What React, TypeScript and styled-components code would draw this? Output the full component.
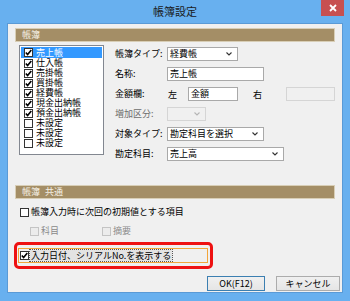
import React from "react";
import styled, { createGlobalStyle } from "styled-components";

const Global = createGlobalStyle`
  html, body { margin: 0; padding: 0; }
  body {
    width: 350px; height: 301px; overflow: hidden;
    background: #68b0ef;
    font-family: "Noto Sans CJK JP", "Noto Sans", sans-serif;
    font-size: 9px; color: #000;
  }
`;

const Window = styled.div`
  width: 350px; height: 301px;
  display: flex; flex-direction: column;
  background: #68b0ef;
  box-sizing: border-box;
`;

const TitleBar = styled.div`
  position: relative;
  height: 23px;
  display: flex; align-items: center; justify-content: center;
  font-size: 11px; line-height: 14px; color: #1a1a1a;
  padding-bottom: 1px; box-sizing: border-box;
`;

const CloseBtn = styled.div`
  position: absolute; top: 0; right: 6px;
  width: 23px; height: 16px;
  background: #c75050;
  display: flex; align-items: center; justify-content: center;
`;

const Client = styled.div`
  margin: 0 7px 8px 7px;
  flex: 1;
  background: #f0f0f0;
  border: 1px solid #5a9ad6;
  border-top-color: #5a9ad6;
  padding: 4px 7px 0 7px;
  display: flex; flex-direction: column;
  box-sizing: border-box;
`;

const SectionHeader = styled.div<{ $mt?: number }>`
  height: 14px;
  margin-top: ${(p) => p.$mt ?? 0}px;
  background: #a48e66;
  border: 1px solid #d8ceb6;
  box-sizing: border-box;
  color: #f4efe4;
  font-size: 9px; line-height: 12px;
  padding-left: 6px;
  display: flex; gap: 5px;
`;

const Body = styled.div`
  display: flex;
  margin-top: 3px;
  padding-left: 4px;
  gap: 11px;
`;

const List = styled.div`
  width: 95px; height: 110px;
  background: #fff;
  border: 1px solid #828790;
  box-sizing: border-box;
  padding: 1px 1px;
  display: flex; flex-direction: column;
`;

const ListRow = styled.div<{ $sel?: boolean }>`
  height: 10px;
  display: flex; align-items: center;
  padding-left: 3px;
  gap: 3px;
  background: ${(p) => (p.$sel ? "#3399ff" : "transparent")};
  color: ${(p) => (p.$sel ? "#fff" : "#000")};
  line-height: 10px;
  &:first-child { height: 11px; }
`;

const Box = styled.span<{ $disabled?: boolean }>`
  width: 9px; height: 9px; flex: none;
  box-sizing: border-box;
  border: 1px solid ${(p) => (p.$disabled ? "#c4c4c4" : "#333")};
  background: ${(p) => (p.$disabled ? "#ececec" : "#fff")};
  display: inline-flex; align-items: center; justify-content: center;
`;

const Check = () => (
  <svg width="7" height="7" viewBox="0 0 7 7">
    <path d="M0.8 3.5 L2.6 5.5 L6.3 0.9" fill="none" stroke="#000" strokeWidth="1.6" />
  </svg>
);

const CheckBox = ({ checked, disabled }: { checked?: boolean; disabled?: boolean }) => (
  <Box $disabled={disabled}>{checked ? <Check /> : null}</Box>
);

const Fields = styled.div`
  margin-top: 2px;
  display: grid;
  grid-template-columns: 52px auto;
  grid-auto-rows: 14px;
  row-gap: 6px;
  align-items: center;
`;

const Label = styled.div<{ $disabled?: boolean }>`
  color: ${(p) => (p.$disabled ? "#6d6d6d" : "#000")};
  line-height: 14px;
  white-space: nowrap;
`;

const Field = styled.div<{ $w: number; $disabled?: boolean }>`
  width: ${(p) => p.$w}px; height: 14px;
  box-sizing: border-box;
  border: 1px solid ${(p) => (p.$disabled ? "#d5d5d5" : "#a9a9a9")};
  background: ${(p) => (p.$disabled ? "#f0f0f0" : "#fff")};
  display: flex; align-items: center;
  padding-left: 2px; padding-right: 5px;
  line-height: 12px;
  white-space: nowrap;
`;

const FieldText = styled.span`
  flex: 1;
`;

const Chevron = ({ color = "#333" }: { color?: string }) => (
  <svg width="6" height="4" viewBox="0 0 6 4">
    <path d="M0.5 0.5 L3 3 L5.5 0.5" fill="none" stroke={color} strokeWidth="1.1" />
  </svg>
);

const AmountRow = styled.div`
  display: flex; align-items: center;
`;

const Side = styled.span<{ $w: number }>`
  width: ${(p) => p.$w}px;
  padding-left: 1px;
`;

const CheckRow = styled.label<{ $indent: number; $mt: number; $gap?: number }>`
  display: flex; align-items: center;
  margin-top: ${(p) => p.$mt}px;
  padding-left: ${(p) => p.$indent}px;
  height: 12px;
  gap: ${(p) => p.$gap ?? 2}px;
  line-height: 12px;
  white-space: nowrap;
`;

const DisabledItem = styled.span<{ $w: number }>`
  display: flex; align-items: center; gap: 2px;
  width: ${(p) => p.$w}px;
  color: #8a8a8a;
`;

const Highlight = styled.div`
  margin-top: 5px;
  margin-left: -1px;
  width: 199px; height: 27px;
  box-sizing: border-box;
  border: 3px solid #ee1111;
  border-radius: 5px;
  padding: 3px 2px 0 1px;
`;

const FocusFrame = styled.div`
  height: 15px;
  box-sizing: border-box;
  border: 1px solid #f2a53a;
  display: flex; align-items: center;
  padding-left: 1px; gap: 1px;
`;

const FocusText = styled.span`
  outline: 1px dotted #555;
  background: #e3e3e3;
  line-height: 11px;
  padding: 0 1px;
`;

const Buttons = styled.div`
  margin-top: 7px;
  margin-right: -5px;
  display: flex; justify-content: flex-end; gap: 11px;
`;

const Button = styled.div<{ $w: number; $default?: boolean }>`
  width: ${(p) => p.$w}px; height: 15px;
  box-sizing: border-box;
  border: 1px solid ${(p) => (p.$default ? "#3c7fb1" : "#acacac")};
  background: linear-gradient(#f0f0f0, #e5e5e5);
  display: flex; align-items: center; justify-content: center;
  line-height: 12px;
`;

const listItems = [
  { t: "売上帳", c: true },
  { t: "仕入帳", c: true },
  { t: "売掛帳", c: true },
  { t: "買掛帳", c: true },
  { t: "経費帳", c: true },
  { t: "現金出納帳", c: true },
  { t: "預金出納帳", c: true },
  { t: "未設定", c: false },
  { t: "未設定", c: false },
  { t: "未設定", c: false },
];

export default function App() {
  return (
    <Window>
      <Global />
      <TitleBar>
        帳簿設定
        <CloseBtn>
          <svg width="8" height="8" viewBox="0 0 8 8">
            <path d="M1 1 L7 7 M7 1 L1 7" stroke="#fff" strokeWidth="1.8" />
          </svg>
        </CloseBtn>
      </TitleBar>
      <Client>
        <SectionHeader>帳簿</SectionHeader>
        <Body>
          <List>
            {listItems.map((it, i) => (
              <ListRow key={i} $sel={i === 0}>
                <CheckBox checked={it.c} />
                <span>{it.t}</span>
              </ListRow>
            ))}
          </List>
          <Fields>
            <Label>帳簿タイプ:</Label>
            <Field $w={71}>
              <FieldText>経費帳</FieldText>
              <Chevron />
            </Field>
            <Label>名称:</Label>
            <Field $w={97}>
              <FieldText>売上帳</FieldText>
            </Field>
            <Label>金額欄:</Label>
            <AmountRow>
              <Side $w={20}>左</Side>
              <Field $w={50}>
                <FieldText>金額</FieldText>
              </Field>
              <Side $w={33} style={{ paddingLeft: 15 }}>右</Side>
              <Field $w={49} $disabled />
            </AmountRow>
            <Label $disabled>増加区分:</Label>
            <Field $w={39} $disabled>
              <FieldText />
              <Chevron color="#b5b5b5" />
            </Field>
            <Label>対象タイプ:</Label>
            <Field $w={97}>
              <FieldText>勘定科目を選択</FieldText>
              <Chevron />
            </Field>
            <Label>勘定科目:</Label>
            <Field $w={117}>
              <FieldText>売上高</FieldText>
              <Chevron />
            </Field>
          </Fields>
        </Body>
        <SectionHeader $mt={24}>
          <span>帳簿</span>
          <span>共通</span>
        </SectionHeader>
        <CheckRow $indent={5} $mt={7}>
          <CheckBox />
          <span>帳簿入力時に次回の初期値とする項目</span>
        </CheckRow>
        <CheckRow $indent={15} $mt={7}>
          <DisabledItem $w={70}>
            <CheckBox disabled />
            科目
          </DisabledItem>
          <DisabledItem $w={60}>
            <CheckBox disabled />
            摘要
          </DisabledItem>
        </CheckRow>
        <Highlight>
          <FocusFrame>
            <CheckBox checked />
            <FocusText>入力日付、シリアルNo.を表示する</FocusText>
          </FocusFrame>
        </Highlight>
        <Buttons>
          <Button $w={58} $default>OK(F12)</Button>
          <Button $w={64}>キャンセル</Button>
        </Buttons>
      </Client>
    </Window>
  );
}
